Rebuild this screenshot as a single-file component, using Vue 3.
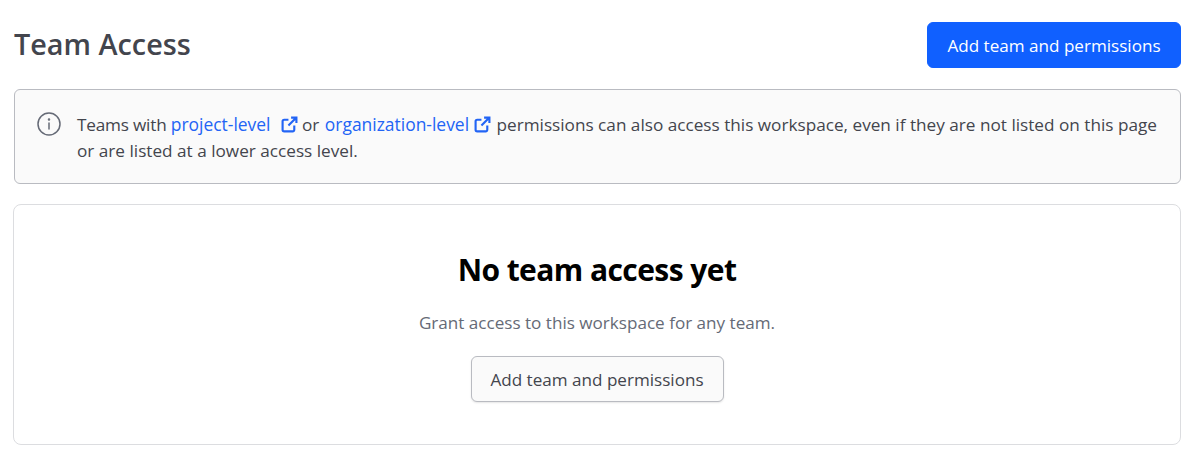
<script setup>
const title = 'Team Access'
const cta = 'Add team and permissions'
</script>

<template>
  <div class="page">
    <header class="head">
      <h1>{{ title }}</h1>
      <button class="btn primary">{{ cta }}</button>
    </header>
    <section class="notice">
      <svg class="info" viewBox="0 0 24 24" width="24" height="24" fill="none" stroke="#656a76" stroke-width="1.5" stroke-linecap="round">
        <circle cx="12" cy="12" r="11" />
        <path d="M12 11v6" />
        <circle cx="12" cy="7.5" r=".5" fill="#656a76" />
      </svg>
      <p>
        <span class="lead">Teams with </span><a href="#">project-level<svg class="ext wide" viewBox="0 0 16 16" width="17" height="17" fill="none" stroke="currentColor" stroke-width="2"><path d="M12.5 9v4a1.5 1.5 0 0 1-1.5 1.5H3A1.5 1.5 0 0 1 1.5 13V5A1.5 1.5 0 0 1 3 3.5h4M9.5 1.5h5v5M14.5 1.5 7 9" /></svg></a> or <a class="second" href="#">organization-level<svg class="ext" viewBox="0 0 16 16" width="17" height="17" fill="none" stroke="currentColor" stroke-width="2"><path d="M12.5 9v4a1.5 1.5 0 0 1-1.5 1.5H3A1.5 1.5 0 0 1 1.5 13V5A1.5 1.5 0 0 1 3 3.5h4M9.5 1.5h5v5M14.5 1.5 7 9" /></svg></a> permissions can also access this workspace, even if they are not listed on this page or are listed at a lower access level.
      </p>
    </section>
    <section class="empty">
      <h2>No team access yet</h2>
      <p>Grant access to this workspace for any team.</p>
      <button class="btn secondary">{{ cta }}</button>
    </section>
  </div>
</template>

<style scoped>
.page {
  box-sizing: border-box;
  width: 1200px;
  padding: 22px 19px 0 14px;
  font-family: "Open Sans", "Noto Sans", sans-serif;
  color: #43454d;
}
.head {
  display: flex;
  justify-content: space-between;
  align-items: center;
  height: 46px;
  margin-bottom: 21px;
}
h1 {
  margin: 0 0 2px;
  font-size: 28.8px;
  font-weight: 600;
  line-height: 44px;
}
.btn {
  box-sizing: border-box;
  width: 254px;
  height: 46px;
  padding: 0;
  font: 400 17.1px "Open Sans", "Noto Sans", sans-serif;
  border-radius: 6px;
}
.primary {
  background: #1060ff;
  border: 1px solid #1060ff;
  color: #fff;
}
.notice {
  display: flex;
  gap: 16px;
  box-sizing: border-box;
  height: 95px;
  padding: 21px 22px 0;
  border: 1px solid #b9bbc1;
  border-radius: 6px;
  background: #fafafa;
  margin-bottom: 20px;
}
.notice p {
  margin: 0;
  font-size: 17.18px;
  line-height: 26px;
}
.info { flex: none; margin-top: 1px; }
.lead { letter-spacing: -0.2px; }
a {
  color: #2264f5;
  font-size: 17.45px;
  text-decoration: none;
}
a.second { margin-left: 1px; }
.ext { vertical-align: -2px; margin: 0 1px 0 5px; }
.ext.wide { margin: 0 0 0 10px; }
.empty {
  box-sizing: border-box;
  height: 241px;
  margin-left: -1px;
  border: 1px solid #dcdde0;
  border-radius: 8px;
  display: flex;
  flex-direction: column;
  align-items: center;
  padding-top: 45px;
}
h2 {
  margin: 0;
  font-size: 30px;
  line-height: 40px;
  font-weight: 700;
  letter-spacing: -0.57px;
  color: #000;
}
.empty p {
  margin: 21px 0 21px;
  font-size: 17.1px;
  line-height: 24px;
  color: #656a76;
}
.secondary {
  width: 253px;
  background: #fafafa;
  border: 1px solid #b9bbc1;
  color: #43454d;
  box-shadow: 0 1px 2px rgba(0,0,0,.1);
}
</style>
